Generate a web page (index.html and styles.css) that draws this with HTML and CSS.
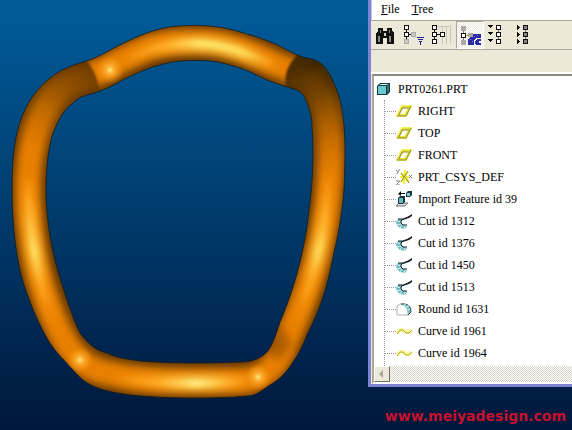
FILE: index.html
```html
<!DOCTYPE html>
<html lang="en">
<head>
  <meta charset="UTF-8">
  <meta name="viewport" content="width=device-width, initial-scale=1.0">
  <title>PRT0261.PRT</title>
  <link rel="stylesheet" href="styles.css">
</head>
<body>
  <!-- shared icon shapes -->
  <svg class="defs" width="0" height="0" aria-hidden="true">
    <symbol id="plane" viewBox="0 0 16 16">
      <path d="M6 3H15L10 13H1Z" fill="none" stroke="#f6f25a" stroke-width="2"/>
      <path d="M7 4H14L9 12H2Z" fill="#fffff0" stroke="#e8e23c" stroke-width="2"/>
      <path d="M3 12L6 5H13M15 3L10 13H1" fill="none" stroke="#8c8a3a"/>
    </symbol>
    <symbol id="cut" viewBox="0 0 16 16">
      <path d="M7 6L2 6L0 9L1 12L4 15L9 16L11 13L7 12L5 9Z" fill="#69b9c0"/>
      <path d="M1 8L5 9M1 12L5 11M4 15L6 12M8 16L9 13" stroke="#d8f4f4"/>
      <path d="M2 6L7 6L12 4L16 2M7 6L5 8V10L7 12H11" fill="none" stroke="#101c20" stroke-width="1"/>
      <path d="M5 7L12 4L16 1V3L13 5L7 7Z" fill="#101c20"/>
    </symbol>
    <symbol id="curve" viewBox="0 0 16 16">
      <path d="M1 10L4 7H7L10 9H13L16 7" fill="none" stroke="#fbf8a4" stroke-width="4"/>
      <path d="M1 11L4 7H7L10 10H13L16 7" fill="none" stroke="#b0aa2c"/>
    </symbol>
  </svg>

  <main class="layout">
    <section class="viewport">
      <svg class="model" viewBox="0 0 368 430" role="img" aria-label="Ring model">
        <defs>
          <path id="tube" fill-rule="evenodd" d="M12 190C12 160 14 141 20 122C26 104 36 89 50 78C60 70 70 66 80 63C88 61 95 58 103 54C121 44 140 34 160 29C180 24 210 24 233 30C248 34 261 38 273 43C283 47 291 53 300 56C306 59 312 58 317 61C323 64 326 68 330 75C337 88 341 101 343 116C346 139 345 165 344 190C342 213 339 231 335 248C331 267 328 282 323 297C318 312 313 323 307 335C303 345 299 354 293 362C287 372 279 380 270 385C261 391 256 396 247 396C229 398 209 398 190 398C169 398 149 397 130 395C116 393 105 391 95 387C84 382 80 378 73 370C61 357 54 350 48 340C41 328 35 315 30 302C26 291 22 280 20 270C16 253 12 222 12 190Z
            M46 190C46 168 48 152 52 136C57 123 62 111 72 104C82 94 87 96 97 92C111 88 121 80 133 75C142 71 151 67 160 65C175 60 197 60 210 61C221 62 230 65 240 68C250 71 258 76 267 80C277 84 287 87 297 90C303 93 305 98 307 103C311 114 312 119 312 128C314 147 313 182 309 210C308 220 307 229 305 238C302 255 298 271 293 287C289 299 285 311 280 322C276 334 273 345 267 352C261 358 253 362 240 362C223 363 206 363 190 363C172 363 153 362 140 361C128 359 116 358 107 353C94 350 87 342 80 333C73 319 66 297 60 278C52 253 46 220 46 190Z"/>
          <mask id="tubeMask"><use href="#tube" fill="#fff"/></mask>
          <filter id="blur1" x="-40%" y="-40%" width="180%" height="180%"><feGaussianBlur stdDeviation="1"/></filter>
          <filter id="blur2" filterUnits="userSpaceOnUse" x="0" y="0" width="368" height="430"><feGaussianBlur stdDeviation="2"/></filter>
          <filter id="blur4" filterUnits="userSpaceOnUse" x="0" y="0" width="368" height="430"><feGaussianBlur stdDeviation="4"/></filter>
          <linearGradient id="darkLeft" gradientUnits="userSpaceOnUse" x1="98" y1="70" x2="35" y2="155">
            <stop offset="0" stop-color="#5c3300" stop-opacity=".85"/>
            <stop offset=".35" stop-color="#6a3b00" stop-opacity=".65"/>
            <stop offset="1" stop-color="#a65b00" stop-opacity="0"/>
          </linearGradient>
          <linearGradient id="darkRight" gradientUnits="userSpaceOnUse" x1="296" y1="68" x2="330" y2="175">
            <stop offset="0" stop-color="#3c2400" stop-opacity=".9"/>
            <stop offset=".3" stop-color="#513000" stop-opacity=".75"/>
            <stop offset="1" stop-color="#9c5500" stop-opacity="0"/>
          </linearGradient>
          <linearGradient id="shineLeft" gradientUnits="userSpaceOnUse" x1="0" y1="170" x2="0" y2="335">
            <stop offset="0" stop-color="#ff9a14" stop-opacity="0"/>
            <stop offset=".25" stop-color="#ffae28"/>
            <stop offset=".5" stop-color="#ffe060"/>
            <stop offset=".7" stop-color="#ffa820" stop-opacity=".8"/>
            <stop offset="1" stop-color="#ff9a14" stop-opacity="0"/>
          </linearGradient>
          <linearGradient id="shineRight" gradientUnits="userSpaceOnUse" x1="0" y1="165" x2="0" y2="330">
            <stop offset="0" stop-color="#ff9a14" stop-opacity="0"/>
            <stop offset=".35" stop-color="#ffb028"/>
            <stop offset=".52" stop-color="#ffdc5c"/>
            <stop offset=".7" stop-color="#ffa820" stop-opacity=".8"/>
            <stop offset="1" stop-color="#ff9a14" stop-opacity="0"/>
          </linearGradient>
          <linearGradient id="shineTop" gradientUnits="userSpaceOnUse" x1="115" y1="0" x2="285" y2="0">
            <stop offset="0" stop-color="#ff9a14" stop-opacity="0"/>
            <stop offset=".3" stop-color="#ffac26"/>
            <stop offset=".5" stop-color="#ffe668"/>
            <stop offset=".75" stop-color="#ffdc58"/>
            <stop offset="1" stop-color="#ff9a14" stop-opacity="0"/>
          </linearGradient>
          <linearGradient id="shineBottom" gradientUnits="userSpaceOnUse" x1="110" y1="0" x2="255" y2="0">
            <stop offset="0" stop-color="#ff9a14" stop-opacity="0"/>
            <stop offset=".35" stop-color="#ffae28"/>
            <stop offset=".6" stop-color="#fff080"/>
            <stop offset=".8" stop-color="#ffb430"/>
            <stop offset="1" stop-color="#ff9a14" stop-opacity="0"/>
          </linearGradient>
          <radialGradient id="spot">
            <stop offset="0" stop-color="#ffe880"/>
            <stop offset=".3" stop-color="#ffb83c" stop-opacity=".8"/>
            <stop offset="1" stop-color="#ff9a10" stop-opacity="0"/>
          </radialGradient>
        </defs>
        <g mask="url(#tubeMask)">
          <use href="#tube" fill="#603600"/>
          <path filter="url(#blur4)" fill="none" stroke="#e87f04" stroke-width="26" d="M28 190C28 150 36 118 57 92C70 80 82 79 97 73C115 64 130 55 150 47C165 42 185 41 205 42C235 43 262 59 285 68C305 76 319 85 326 110C333 145 331 180 326 215C319 262 304 300 286 342C278 366 262 381 240 381H190C150 381 130 379 99 371C69 362 54 325 40 280C32 250 28 220 28 190Z"/>
          <g fill="none" stroke-width="13" filter="url(#blur4)" opacity=".85">
            <path stroke="url(#shineLeft)" d="M28 170C28 225 35 275 54 325"/>
            <path stroke="url(#shineRight)" d="M328 165C327 225 316 275 296 325"/>
            <path stroke="url(#shineTop)" d="M115 67C140 50 170 44 195 44C230 44 250 57 280 67"/>
            <path stroke="url(#shineBottom)" d="M110 376C150 384 220 385 255 379"/>
          </g>
          <g fill="none" stroke-width="5" filter="url(#blur2)">
            <path stroke="url(#shineLeft)" d="M28 180C28 225 34 262 45 300"/>
            <path stroke="url(#shineRight)" d="M328 180C327 225 317 265 303 303"/>
            <path stroke="url(#shineTop)" d="M130 58C150 47 170 43 195 43C230 44 248 55 272 63"/>
            <path stroke="url(#shineBottom)" d="M120 378C150 384 220 385 250 380"/>
          </g>
          <path filter="url(#blur1)" fill="url(#darkLeft)" d="M84 58Q97 70 101 96L60 130L30 180H0V60Z"/>
          <path filter="url(#blur1)" fill="url(#darkRight)" d="M304 50Q278 68 288 96L304 110V185H355V50Z"/>
          <path filter="url(#blur4)" d="M262 346L278 361L292 345L281 325Z" fill="#8a4900" opacity=".6"/>
          <circle cx="110" cy="70" r="14" fill="url(#spot)"/>
          <circle cx="80" cy="360" r="13" fill="url(#spot)"/>
          <circle cx="258" cy="377" r="13" fill="url(#spot)"/>
        </g>
        <use href="#tube" fill="none" stroke="#1d1c18" stroke-opacity=".8"/>
      </svg>
    </section>

    <aside class="side">
      <div class="panel">
        <nav class="menubar">
          <button type="button"><u>F</u>ile</button>
          <button type="button"><u>T</u>ree</button>
        </nav>

        <div class="toolbar">
          <button type="button" aria-label="Find">
            <svg viewBox="0 0 22 22">
              <path d="M2 4H7V7H11V4H16V7L18 9V20H11V14H7V20H0V9L2 7Z" fill="#111"/>
              <path d="M2 12H4V18H2ZM13 12H15V18H13ZM4 6H5V9H4ZM13 6H14V9H13Z" fill="#8b8b84"/>
              <path d="M8 9H10V12H8Z" fill="#d8d5c6"/>
            </svg>
          </button>
          <button type="button" aria-label="Filter tree">
            <svg viewBox="0 0 22 22">
              <path d="M2 6H3V8H2ZM2 13H3V15H2ZM5 10H7V11H5Z" fill="#111"/>
              <path d="M0 1H5V6H0ZM0 8H5V13H0Z" fill="#111"/>
              <path d="M1 2H4V5H1ZM1 9H4V12H1Z" fill="#fff"/>
              <path d="M0 15H5V20H0ZM7 8H12V13H7Z" fill="#aaa"/>
              <path d="M1 16H4V19H1ZM8 9H11V12H8Z" fill="#c8c8c0"/>
              <path d="M13 13H20V14H13ZM14 15H19V16H14ZM15 17H18V18H17V21H16V18H15Z" fill="#2222a0"/>
            </svg>
          </button>
          <button type="button" aria-label="Tree columns">
            <svg viewBox="0 0 22 22">
              <path d="M6 2H19V20H18V3H15V20H14V3H11V20H10V3H6Z" fill="#c9c7bb"/>
              <path d="M2 6H3V15H2ZM5 10H8V11H5Z" fill="#111"/>
              <path d="M0 1H5V6H0ZM0 8H5V13H0ZM0 15H5V20H0ZM8 8H13V13H8Z" fill="#111"/>
              <path d="M1 2H4V5H1ZM1 9H4V12H1ZM1 16H4V19H1ZM9 9H12V12H9Z" fill="#fff"/>
            </svg>
          </button>
          <button type="button" class="pressed" aria-label="Highlight geometry" aria-pressed="true">
            <svg viewBox="0 0 22 22">
              <path d="M1 2H6V7H1ZM1 16H6V21H1ZM8 9H13V13H8Z" fill="#aaa"/>
              <path d="M3 7H4V9H3ZM3 14H4V16H3Z" fill="#777"/>
              <path d="M1 9H6V14H1Z" fill="#111"/><path d="M2 10H5V13H2Z" fill="#fff"/>
              <path d="M6 11H9V12H6Z" fill="#c0a820"/>
              <path d="M13 10H21V14H16L14 16V21H8V16L10 13H13Z" fill="#2929a5"/>
              <path d="M17 15H21V17H19V19H21V21H16L15 18Z" fill="#2929a5"/>
              <path d="M10 15H11V16H10ZM12 17H13V18H12ZM14 12H15V13H14ZM17 11H18V12H17Z" fill="#8888e0"/>
            </svg>
          </button>
          <button type="button" aria-label="Expand all">
            <svg viewBox="0 0 22 22">
              <path d="M10 6H11V15H10Z" fill="#777"/>
              <path d="M0 1H5L3 4H2ZM0 8H5L3 11H2ZM0 15H5L3 18H2ZM8 1H13V6H8ZM8 8H13V13H8ZM8 15H13V20H8Z" fill="#111"/>
              <path d="M9 2H12V5H9ZM9 9H12V12H9ZM9 16H12V19H9Z" fill="#fff"/>
            </svg>
          </button>
          <button type="button" aria-label="Collapse all">
            <svg viewBox="0 0 22 22">
              <path d="M9 6H10V15H9Z" fill="#777"/>
              <path d="M1 1L4 3V4L1 6ZM1 8L4 10V11L1 13ZM1 15L4 17V18L1 20ZM7 1H12V6H7ZM7 8H12V13H7ZM7 15H12V20H7Z" fill="#111"/>
              <path d="M8 2H11V5H8ZM8 9H11V12H8ZM8 16H11V19H8Z" fill="#858580"/>
            </svg>
          </button>
        </div>
        <div class="strip"></div>

        <div class="tree">
          <div class="root">
            <svg class="icon" viewBox="0 0 16 16">
              <path d="M1 5L4 2H14V11L11 14H1Z" fill="#17383e"/>
              <path d="M3 4L5 3H12L11 4Z" fill="#d8f4f4"/>
              <path d="M2 5H10V13H2Z" fill="#67cbd0"/>
              <path d="M11 5L13 3V10L11 12Z" fill="#34757d"/>
            </svg>
            <span>PRT0261.PRT</span>
          </div>
          <ul>
            <li><svg class="icon"><use href="#plane"/></svg>RIGHT</li>
            <li><svg class="icon"><use href="#plane"/></svg>TOP</li>
            <li><svg class="icon"><use href="#plane"/></svg>FRONT</li>
            <li>
              <svg class="icon" viewBox="0 0 16 16">
                <path d="M9 1L8 15M4 8H13M5 4L13 13M12 3L5 13" stroke="#f6ee3a" stroke-width="2"/>
                <path d="M5 4L8 8L5 13M8 8L12 2M9 8L13 14" fill="none" stroke="#8c8c3a"/>
                <path d="M0 1L2 3L4 0M2 3L1 5M13 6L16 9M16 6L13 9M0 12H4L0 16H4" fill="none" stroke="#88888c"/>
              </svg>PRT_CSYS_DEF
            </li>
            <li>
              <svg class="icon" viewBox="0 0 16 16">
                <path d="M0 15L3 12H12L9 15Z" fill="#ddd" stroke="#777"/>
                <path d="M2 7L4 5H9V11L7 13H2Z" fill="#17383e"/><path d="M3 7H7V12H3Z" fill="#67b9bc"/>
                <path d="M10 2L12 0H16V4L14 6H10Z" fill="#17383e"/><path d="M11 2H14V5H11Z" fill="#7ed0d0"/>
                <path d="M2 3L5 0V2H9V3H5V5Z" fill="#111"/>
              </svg>Import Feature id 39
            </li>
            <li><svg class="icon"><use href="#cut"/></svg>Cut id 1312</li>
            <li><svg class="icon"><use href="#cut"/></svg>Cut id 1376</li>
            <li><svg class="icon"><use href="#cut"/></svg>Cut id 1450</li>
            <li><svg class="icon"><use href="#cut"/></svg>Cut id 1513</li>
            <li>
              <svg class="icon" viewBox="0 0 16 16">
                <path d="M1 5L4 3H8L12 7V14H1Z" fill="#fff" stroke="#b5aab0"/>
                <path d="M5 3H9Q15 4 15 11L12 13Q12 6 5 3Z" fill="#75c3c8"/>
                <path d="M5 3H9Q15 4 15 11L12 14" fill="none" stroke="#28474b"/>
                <path d="M8 4L10 3M10 6L13 5M12 9L14 8" stroke="#d8f4f4"/>
              </svg>Round id 1631
            </li>
            <li><svg class="icon"><use href="#curve"/></svg>Curve id 1961</li>
            <li><svg class="icon"><use href="#curve"/></svg>Curve id 1964</li>
          </ul>
          <div class="scrollbar">
            <button type="button" aria-label="Scroll left">
              <svg viewBox="0 0 8 8"><path d="M5 0V8L1 4Z" fill="#aaa899"/></svg>
            </button>
          </div>
        </div>
      </div>
      <a class="site" href="#">www.meiyadesign.com</a>
    </aside>
  </main>
</body>
</html>
```
FILE: styles.css
```css
body {
  margin: 0;
  min-height: 100vh;
  font-family: "Liberation Serif", "Times New Roman", serif;
  font-size: 12px;
  color: #000;
  background: linear-gradient(#005c9a, #003b6c 50%, #00173b);
}

.defs {
  position: absolute;
}

.layout {
  display: grid;
  grid-template-columns: 368fr 204fr;
  align-items: start;
}

.model {
  display: block;
  width: 100%;
}

.panel {
  border-left: 3px solid #7b83d2;
  border-bottom: 3px solid #7b83d2;
  background: #ece9d8;
}

button {
  padding: 0;
  border: none;
  background: none;
  font: inherit;
  color: inherit;
}

.menubar {
  display: flex;
  gap: 12px;
  height: 20px;
  padding-left: 9px;
  background: #fff;
  border-left: 1px solid #c3c5e6;
}

.menubar button {
  padding-bottom: 2px;
}

.toolbar {
  display: flex;
  height: 28px;
  padding-left: 1px;
  border-top: 1px solid #aca899;
  border-bottom: 1px solid #aca899;
}

.toolbar button {
  box-sizing: border-box;
  width: 28px;
  padding: 3px 2px 3px 4px;
}

.toolbar .pressed {
  padding: 2px 1px 2px 3px;
  border: 1px solid;
  border-color: #aca899 #fff #fff #aca899;
  background: repeating-conic-gradient(#fff 0 25%, #ece9e0 0 50%) 0 0 / 2px 2px;
}

.toolbar svg {
  display: block;
  width: 22px;
  height: 22px;
  shape-rendering: crispEdges;
}

.strip {
  height: 22px;
  border-bottom: 2px solid #fff;
}

.tree {
  margin-left: 1px;
  border: 1px solid #716f64;
  border-width: 2px 0 2px 2px;
  border-color: #8b897c #fff #fff #aca899;
  background: #fff;
}

.root,
.tree li {
  display: flex;
  align-items: center;
  height: 22px;
  white-space: nowrap;
}

.root {
  gap: 6px;
  padding: 2px 0 0 2px;
}

.icon {
  flex: none;
  width: 16px;
  height: 16px;
}

.tree ul {
  margin: 0 0 0 10px;
  padding: 0 0 2px;
  list-style: none;
  border-left: 1px dotted #999;
}

.tree li {
  gap: 6px;
}

/* dotted branch line */
.tree li::before {
  content: "";
  width: 11px;
  margin-right: -6px;
  border-top: 1px dotted #999;
}

.scrollbar {
  height: 16px;
  background: repeating-conic-gradient(#fff 0 25%, #d8d5c8 0 50%) 0 0 / 2px 2px;
}

.scrollbar button {
  display: grid;
  place-items: center;
  box-sizing: border-box;
  width: 16px;
  height: 16px;
  border: 1px solid;
  border-color: #fff #716f64 #716f64 #fff;
  background: #ece9d8;
}

.scrollbar svg {
  width: 8px;
  height: 8px;
}

.site {
  display: block;
  padding: 20px 6px 0 0;
  text-align: right;
  font: bold 14px/18px "DejaVu Sans", Verdana, sans-serif;
  color: #c5112d;
  text-decoration: none;
}
```
